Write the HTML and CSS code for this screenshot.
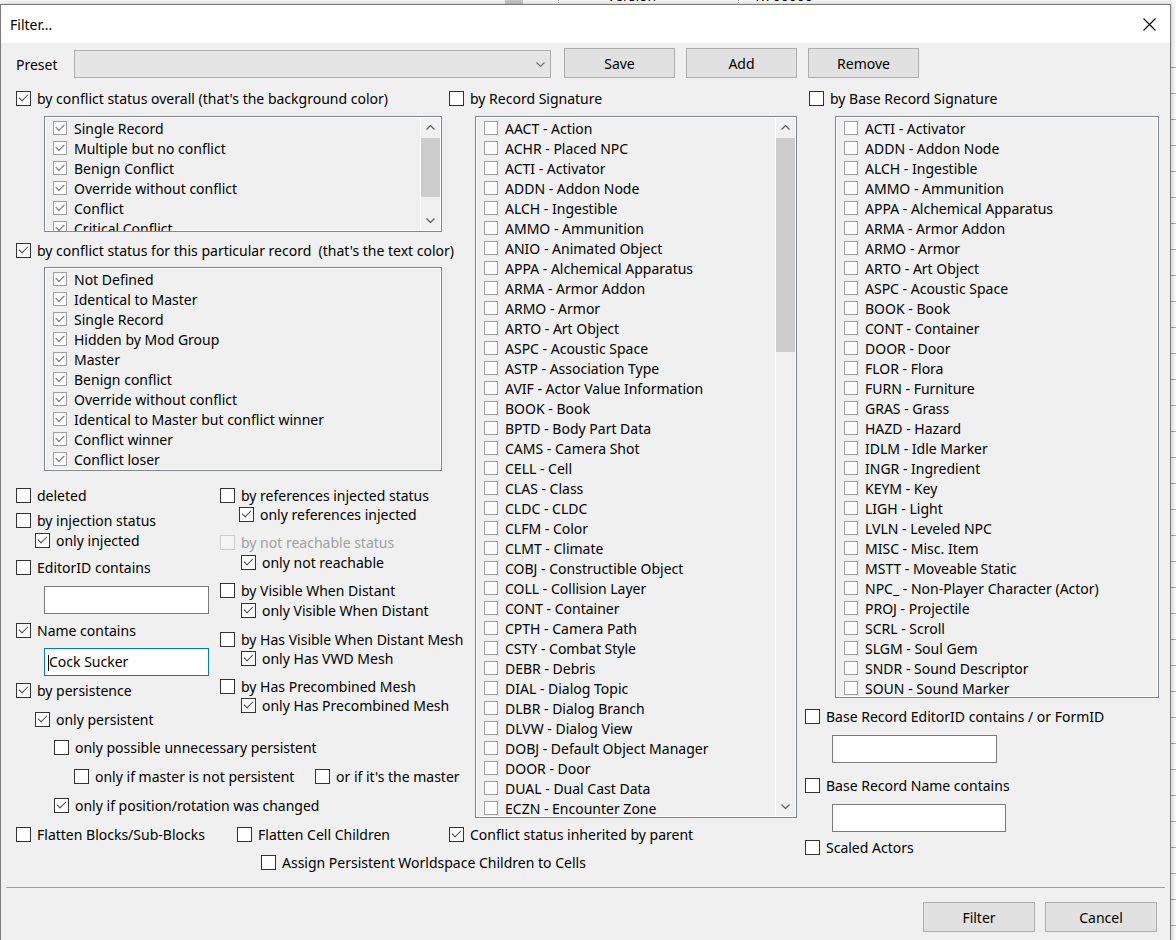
FILE: index.html
```html
<!DOCTYPE html>
<html lang="en">
<head>
  <meta charset="UTF-8" />
  <title>Filter...</title>
  <link rel="stylesheet" href="styles.css">
</head>
<body>

<!-- bits of the main window that peek out around the dialog -->
<div class="behind">
  <span class="behind-thumb"></span>
  <span class="behind-line line-a"></span>
  <span class="behind-line line-b"></span>
  <span class="behind-name">Version</span>
  <span class="behind-value">1.700000</span>
</div>
<div class="guides"></div>

<div class="dialog">
  <div class="titlebar">
    <span class="title">Filter...</span>
    <svg class="close" width="13" height="13" viewBox="0 0 13 13">
      <path d="M0.5 0.5 L12.5 12.5 M12.5 0.5 L0.5 12.5" stroke="#000" stroke-width="1.1" fill="none"/>
    </svg>
  </div>

  <div class="content">
    <div class="preset-row">
      <span class="preset-label">Preset</span>
      <div class="combo">
        <svg class="combo-arrow" width="9" height="5" viewBox="0 0 9 5"><polyline points="0.5,0.5 4.5,4.5 8.5,0.5" fill="none" stroke="#707070" stroke-width="1.1"/></svg>
      </div>
      <button class="btn">Save</button>
      <button class="btn">Add</button>
      <button class="btn">Remove</button>
    </div>

    <div class="main">
      <div class="left">
        <div class="cols">

          <!-- conflict status column -->
          <div class="col-status">
            <div class="row"><span class="box on"></span>by conflict status overall (that's the background color)</div>
            <div class="list list-overall">
              <div class="items">
                <div class="item"><span class="box on"></span>Single Record</div>
                <div class="item"><span class="box on"></span>Multiple but no conflict</div>
                <div class="item"><span class="box on"></span>Benign Conflict</div>
                <div class="item"><span class="box on"></span>Override without conflict</div>
                <div class="item"><span class="box on"></span>Conflict</div>
                <div class="item"><span class="box on"></span>Critical Conflict</div>
              </div>
              <div class="vscroll">
                <div class="arrow"><svg width="9" height="5" viewBox="0 0 9 5"><polyline points="0.5,4.5 4.5,0.5 8.5,4.5" fill="none" stroke="#606060" stroke-width="1.3"/></svg></div>
                <div class="track"><div class="thumb thumb-overall"></div></div>
                <div class="arrow"><svg width="9" height="5" viewBox="0 0 9 5"><polyline points="0.5,0.5 4.5,4.5 8.5,0.5" fill="none" stroke="#606060" stroke-width="1.3"/></svg></div>
              </div>
            </div>

            <div class="row row-record"><span class="box on"></span>by conflict status for this particular record&nbsp; (that's the text color)</div>
            <div class="list list-record">
              <div class="items">
                <div class="item"><span class="box on"></span>Not Defined</div>
                <div class="item"><span class="box on"></span>Identical to Master</div>
                <div class="item"><span class="box on"></span>Single Record</div>
                <div class="item"><span class="box on"></span>Hidden by Mod Group</div>
                <div class="item"><span class="box on"></span>Master</div>
                <div class="item"><span class="box on"></span>Benign conflict</div>
                <div class="item"><span class="box on"></span>Override without conflict</div>
                <div class="item"><span class="box on"></span>Identical to Master but conflict winner</div>
                <div class="item"><span class="box on"></span>Conflict winner</div>
                <div class="item"><span class="box on"></span>Conflict loser</div>
              </div>
            </div>

            <div class="options">
              <div class="opt-a">
                <div class="row"><span class="box"></span>deleted</div>
                <div class="row gap-5"><span class="box"></span>by injection status</div>
                <div class="row sub"><span class="box on"></span>only injected</div>
                <div class="row gap-7"><span class="box"></span>EditorID contains</div>
                <div class="field gap-9"></div>
                <div class="row gap-6"><span class="box on"></span>Name contains</div>
                <div class="field focused gap-8"><span class="caret"></span>Cock Sucker</div>
                <div class="row gap-4"><span class="box on"></span>by persistence</div>
                <div class="row sub gap-9"><span class="box on"></span>only persistent</div>
                <div class="row sub2 gap-8"><span class="box"></span>only possible unnecessary persistent</div>
                <div class="row sub3 gap-9">
                  <span class="pair-first"><span class="box"></span>only if master is not persistent</span>
                  <span class="box"></span>or if it's the master
                </div>
                <div class="row sub2 gap-9"><span class="box on"></span>only if position/rotation was changed</div>
              </div>

              <div class="opt-b">
                <div class="row"><span class="box"></span>by references injected status</div>
                <div class="row sub tight"><span class="box on"></span>only references injected</div>
                <div class="row gap-8 disabled"><span class="box"></span>by not reachable status</div>
                <div class="row sub-b"><span class="box on"></span>only not reachable</div>
                <div class="row gap-8"><span class="box"></span>by Visible When Distant</div>
                <div class="row sub-b"><span class="box on"></span>only Visible When Distant</div>
                <div class="row gap-9"><span class="box"></span>by Has Visible When Distant Mesh</div>
                <div class="row sub-b tight"><span class="box on"></span>only Has VWD Mesh</div>
                <div class="row gap-8"><span class="box"></span>by Has Precombined Mesh</div>
                <div class="row sub-b tight"><span class="box on"></span>only Has Precombined Mesh</div>
              </div>
            </div>
          </div>

          <!-- record signature column -->
          <div class="col-sig">
            <div class="row"><span class="box"></span>by Record Signature</div>
            <div class="list list-sig">
              <div class="items">
                <div class="item"><span class="box"></span>AACT - Action</div>
                <div class="item"><span class="box"></span>ACHR - Placed NPC</div>
                <div class="item"><span class="box"></span>ACTI - Activator</div>
                <div class="item"><span class="box"></span>ADDN - Addon Node</div>
                <div class="item"><span class="box"></span>ALCH - Ingestible</div>
                <div class="item"><span class="box"></span>AMMO - Ammunition</div>
                <div class="item"><span class="box"></span>ANIO - Animated Object</div>
                <div class="item"><span class="box"></span>APPA - Alchemical Apparatus</div>
                <div class="item"><span class="box"></span>ARMA - Armor Addon</div>
                <div class="item"><span class="box"></span>ARMO - Armor</div>
                <div class="item"><span class="box"></span>ARTO - Art Object</div>
                <div class="item"><span class="box"></span>ASPC - Acoustic Space</div>
                <div class="item"><span class="box"></span>ASTP - Association Type</div>
                <div class="item"><span class="box"></span>AVIF - Actor Value Information</div>
                <div class="item"><span class="box"></span>BOOK - Book</div>
                <div class="item"><span class="box"></span>BPTD - Body Part Data</div>
                <div class="item"><span class="box"></span>CAMS - Camera Shot</div>
                <div class="item"><span class="box"></span>CELL - Cell</div>
                <div class="item"><span class="box"></span>CLAS - Class</div>
                <div class="item"><span class="box"></span>CLDC - CLDC</div>
                <div class="item"><span class="box"></span>CLFM - Color</div>
                <div class="item"><span class="box"></span>CLMT - Climate</div>
                <div class="item"><span class="box"></span>COBJ - Constructible Object</div>
                <div class="item"><span class="box"></span>COLL - Collision Layer</div>
                <div class="item"><span class="box"></span>CONT - Container</div>
                <div class="item"><span class="box"></span>CPTH - Camera Path</div>
                <div class="item"><span class="box"></span>CSTY - Combat Style</div>
                <div class="item"><span class="box"></span>DEBR - Debris</div>
                <div class="item"><span class="box"></span>DIAL - Dialog Topic</div>
                <div class="item"><span class="box"></span>DLBR - Dialog Branch</div>
                <div class="item"><span class="box"></span>DLVW - Dialog View</div>
                <div class="item"><span class="box"></span>DOBJ - Default Object Manager</div>
                <div class="item"><span class="box"></span>DOOR - Door</div>
                <div class="item"><span class="box"></span>DUAL - Dual Cast Data</div>
                <div class="item"><span class="box"></span>ECZN - Encounter Zone</div>
              </div>
              <div class="vscroll">
                <div class="arrow"><svg width="9" height="5" viewBox="0 0 9 5"><polyline points="0.5,4.5 4.5,0.5 8.5,4.5" fill="none" stroke="#606060" stroke-width="1.3"/></svg></div>
                <div class="track"><div class="thumb thumb-sig"></div></div>
                <div class="arrow"><svg width="9" height="5" viewBox="0 0 9 5"><polyline points="0.5,0.5 4.5,4.5 8.5,0.5" fill="none" stroke="#606060" stroke-width="1.3"/></svg></div>
              </div>
            </div>
          </div>
        </div>

        <div class="flatten-row">
          <div class="row"><span class="box"></span>Flatten Blocks/Sub-Blocks</div>
          <div class="row"><span class="box"></span>Flatten Cell Children</div>
          <div class="row"><span class="box on"></span>Conflict status inherited by parent</div>
        </div>
        <div class="row assign"><span class="box"></span>Assign Persistent Worldspace Children to Cells</div>
      </div>

      <!-- base record column -->
      <div class="col-base">
        <div class="row base-head"><span class="box"></span>by Base Record Signature</div>
        <div class="list list-base">
          <div class="items">
            <div class="item"><span class="box"></span>ACTI - Activator</div>
            <div class="item"><span class="box"></span>ADDN - Addon Node</div>
            <div class="item"><span class="box"></span>ALCH - Ingestible</div>
            <div class="item"><span class="box"></span>AMMO - Ammunition</div>
            <div class="item"><span class="box"></span>APPA - Alchemical Apparatus</div>
            <div class="item"><span class="box"></span>ARMA - Armor Addon</div>
            <div class="item"><span class="box"></span>ARMO - Armor</div>
            <div class="item"><span class="box"></span>ARTO - Art Object</div>
            <div class="item"><span class="box"></span>ASPC - Acoustic Space</div>
            <div class="item"><span class="box"></span>BOOK - Book</div>
            <div class="item"><span class="box"></span>CONT - Container</div>
            <div class="item"><span class="box"></span>DOOR - Door</div>
            <div class="item"><span class="box"></span>FLOR - Flora</div>
            <div class="item"><span class="box"></span>FURN - Furniture</div>
            <div class="item"><span class="box"></span>GRAS - Grass</div>
            <div class="item"><span class="box"></span>HAZD - Hazard</div>
            <div class="item"><span class="box"></span>IDLM - Idle Marker</div>
            <div class="item"><span class="box"></span>INGR - Ingredient</div>
            <div class="item"><span class="box"></span>KEYM - Key</div>
            <div class="item"><span class="box"></span>LIGH - Light</div>
            <div class="item"><span class="box"></span>LVLN - Leveled NPC</div>
            <div class="item"><span class="box"></span>MISC - Misc. Item</div>
            <div class="item"><span class="box"></span>MSTT - Moveable Static</div>
            <div class="item"><span class="box"></span>NPC_ - Non-Player Character (Actor)</div>
            <div class="item"><span class="box"></span>PROJ - Projectile</div>
            <div class="item"><span class="box"></span>SCRL - Scroll</div>
            <div class="item"><span class="box"></span>SLGM - Soul Gem</div>
            <div class="item"><span class="box"></span>SNDR - Sound Descriptor</div>
            <div class="item"><span class="box"></span>SOUN - Sound Marker</div>
          </div>
        </div>
        <div class="row base-editor"><span class="box"></span>Base Record EditorID contains / or FormID</div>
        <div class="field base-field"></div>
        <div class="row base-name"><span class="box"></span>Base Record Name contains</div>
        <div class="field base-field wide"></div>
        <div class="row base-scaled"><span class="box"></span>Scaled Actors</div>
      </div>
    </div>
  </div>

  <div class="separator"></div>
  <div class="footer">
    <button class="btn">Filter</button>
    <button class="btn">Cancel</button>
  </div>
</div>

</body>
</html>
```

FILE: styles.css
```css
html, body {
  margin: 0;
  padding: 0;
}

body {
  width: 1176px;
  height: 940px;
  overflow: hidden;
  position: relative;
  background: #fff;
  font-family: "Noto Sans", sans-serif;
  font-size: 14px;
  color: #000;
}

/* main window behind the dialog */
.behind {
  position: absolute;
  top: 0;
  left: 0;
  width: 1176px;
  height: 5px;
  overflow: hidden;
  background: #fafafa;
}

.behind-thumb {
  position: absolute;
  left: 505px;
  top: 0;
  width: 18px;
  height: 5px;
  background: #c8c8c8;
}

.behind-line {
  position: absolute;
  top: 0;
  height: 5px;
  border-left: 1px dotted #999;
}

.line-a { left: 558px; }
.line-b { left: 738px; }

.behind-name,
.behind-value {
  position: absolute;
  top: -14px;
  line-height: 20px;
}

.behind-name { left: 607px; }
.behind-value { left: 753px; }

.guides {
  position: absolute;
  top: 60px;
  right: 0;
  width: 6px;
  height: 880px;
  background: repeating-linear-gradient(to bottom, transparent 0 7px, #b0b0b0 7px 8px, transparent 8px 26px);
}

/* dialog window */
.dialog {
  position: absolute;
  left: 0;
  top: 4px;
  width: 1169px;
  height: 945px;
  border: 1px solid #7a7a7a;
  background: #f0f0f0;
  box-shadow: 1px 0 5px rgba(0, 0, 0, 0.25);
}

.titlebar {
  height: 38px;
  background: #fff;
  display: flex;
  align-items: center;
  justify-content: space-between;
  padding: 0 14px 0 9px;
}

.close {
  display: block;
}

.content {
  padding: 0 0 0 15px;
}

.preset-row {
  display: flex;
  align-items: flex-end;
  height: 30px;
  margin-top: 5px;
}

.preset-label {
  width: 58px;
  line-height: 26px;
}

.combo {
  width: 470px;
  height: 26px;
  border: 1px solid #adadad;
  background: #e5e5e5;
  margin-right: 13px;
  display: flex;
  align-items: center;
  justify-content: flex-end;
  padding-right: 5px;
  box-sizing: content-box;
}

.btn {
  width: 111px;
  height: 30px;
  margin: 0 11px 0 0;
  padding: 0;
  border: 1px solid #adadad;
  background: #e1e1e1;
  font-family: inherit;
  font-size: 14px;
  color: #000;
}

/* checkbox rows */
.row {
  display: flex;
  align-items: center;
  height: 20px;
  white-space: nowrap;
}

.box {
  width: 13px;
  height: 13px;
  border: 1px solid #333;
  background: #fff;
  margin-right: 6px;
  position: relative;
  flex: none;
}

.box.on::after {
  content: "";
  position: absolute;
  left: 2px;
  top: 2px;
  width: 8px;
  height: 4px;
  border-left: 1px solid #444;
  border-bottom: 1px solid #444;
  transform: rotate(-45deg);
}

.disabled {
  color: #a0a0a0;
}

.disabled .box {
  border-color: #cccccc;
  background: #f5f5f5;
}

.main {
  display: flex;
  margin-top: 10px;
}

.left {
  width: 789px;
}

.cols {
  display: flex;
}

.col-status {
  width: 433px;
}

.col-sig {
  width: 356px;
}

/* list boxes */
.list {
  display: flex;
  border: 1px solid #828790;
  box-shadow: inset 0 0 0 1px #fff;
  background: #f0f0f0;
  overflow: hidden;
  box-sizing: border-box;
  margin-top: 8px;
}

.items {
  flex: 1;
  padding-top: 1px;
}

.item {
  display: flex;
  align-items: center;
  height: 20px;
  padding-left: 8px;
  white-space: nowrap;
}

.item .box {
  width: 12px;
  height: 12px;
  border-color: #a0a0a0;
  background: #fafafa;
  margin-right: 7px;
}

.item .box.on::after {
  left: 2px;
  top: 2px;
  width: 7px;
  border-color: #666;
}

.list-overall {
  margin-left: 28px;
  width: 398px;
  height: 116px;
}

.list-record {
  margin-left: 28px;
  margin-top: 7px;
  width: 398px;
  height: 204px;
}

.list-sig {
  margin-left: 26px;
  width: 322px;
  height: 702px;
}

.list-base {
  margin-left: 30px;
  width: 324px;
  height: 582px;
}

.vscroll {
  width: 19px;
  margin-right: 1px;
  border-left: 1px solid #fff;
  display: flex;
  flex-direction: column;
}

.arrow {
  height: 21px;
  display: flex;
  align-items: center;
  justify-content: center;
}

.arrow svg {
  display: block;
}

.track {
  flex: 1;
}

.thumb {
  background: #cdcdcd;
}

.thumb-overall { height: 59px; }
.thumb-sig { height: 214px; }

.row-record {
  margin-top: 8px;
}

/* filter options under the status lists */
.options {
  display: flex;
  margin-top: 14px;
}

.opt-a {
  width: 204px;
}

.sub { padding-left: 19px; }
.sub2 { padding-left: 38px; }
.sub3 { padding-left: 58px; }
.sub-b { padding-left: 21px; }
.sub.tight, .sub-b.tight { margin-top: -1px; }

.pair-first {
  display: flex;
  align-items: center;
  flex: none;
  width: 241px;
}

.gap-4 { margin-top: 4px; }
.gap-5 { margin-top: 5px; }
.gap-6 { margin-top: 6px; }
.gap-7 { margin-top: 7px; }
.gap-8 { margin-top: 8px; }
.gap-9 { margin-top: 9px; }

.field {
  width: 160px;
  height: 26px;
  margin-left: 28px;
  border: 1px solid #7a7a7a;
  background: #fff;
  line-height: 26px;
  padding-left: 3px;
  box-sizing: content-box;
  white-space: nowrap;
}

.field.focused {
  border-color: #0078d7;
}

.caret {
  display: inline-block;
  width: 0;
  height: 16px;
  border-left: 1px solid #000;
  vertical-align: middle;
}

.flatten-row {
  display: grid;
  grid-template-columns: 221px 212px auto;
  margin-top: 6px;
}

.assign {
  margin-top: 8px;
  padding-left: 245px;
}

/* base record column */
.col-base {
  width: 365px;
}

.base-head {
  padding-left: 4px;
}

.base-editor {
  margin-top: 8px;
}

.base-field {
  margin-left: 27px;
  margin-top: 9px;
}

.base-field.wide {
  width: 169px;
}

.base-name {
  margin-top: 12px;
}

.base-scaled {
  margin-top: 5px;
}

.separator {
  height: 1px;
  background: #a0a0a0;
  margin: 15px 5px 0 5px;
}

.footer {
  display: flex;
  justify-content: flex-end;
  margin-top: 14px;
  padding-right: 13px;
}

.footer .btn {
  width: 112px;
  margin: 0 0 0 10px;
}
```
